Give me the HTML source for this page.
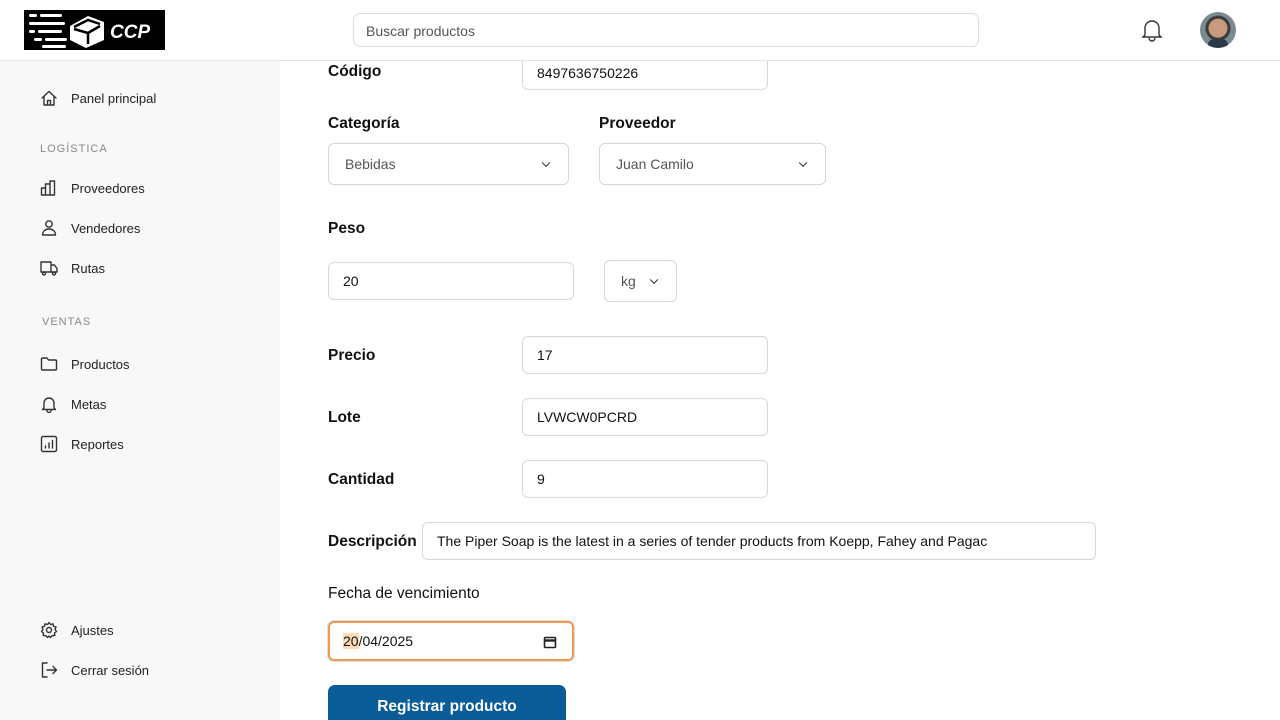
<!DOCTYPE html>
<html><head><meta charset="utf-8"><style>
*{box-sizing:border-box;margin:0;padding:0}
html{width:1280px;height:720px;overflow:hidden}
body{width:1280px;height:720px;overflow:hidden;font-family:"Liberation Sans",Arial,sans-serif;background:#fff;position:relative;color:#111}
.hdr{position:absolute;left:0;top:0;width:1280px;height:61px;background:#fff;border-bottom:1px solid #e5e5e5;z-index:5}
.side{position:absolute;left:0;top:61px;width:280px;height:659px;background:#f8f8f8}
.it{position:absolute;left:40px;font-size:13px;color:#222;display:flex;align-items:center}
.it svg{width:18px;height:18px;margin-right:13px;fill:none;stroke:#333;stroke-width:1.4;stroke-linecap:round;stroke-linejoin:round}
.sec{position:absolute;font-size:11px;letter-spacing:1px;color:#888}
.lbl{position:absolute;font-size:15.5px;font-weight:bold;color:#111}
.inp{position:absolute;border:1px solid #d6d6d6;border-radius:6px;background:#fff;font-size:14px;padding-left:14px;display:flex;align-items:center}
.sel{position:absolute;border:1px solid #d6d6d6;border-radius:6px;background:#fff;font-size:14px;color:#555;padding-left:16px;display:flex;align-items:center}
.sel:after{content:"";position:absolute;right:19px;top:50%;width:5px;height:5px;border-right:1.6px solid #222;border-bottom:1.6px solid #222;transform:translateY(-70%) rotate(45deg)}
</style></head><body>
<div class="hdr">
 <div style="position:absolute;left:24px;top:10px;width:141px;height:40px;background:#000">
  <svg width="141" height="40" viewBox="0 0 141 40">
   <g fill="#fff"><rect x="5" y="4" width="8" height="3" rx="1.5"/><rect x="16" y="4" width="22" height="3" rx="1.5"/>
   <rect x="5" y="12" width="36" height="3" rx="1.5"/><rect x="5" y="20" width="6" height="3" rx="1.5"/><rect x="14" y="20" width="24" height="3" rx="1.5"/>
   <rect x="10" y="28" width="8" height="3" rx="1.5"/><rect x="21" y="28" width="22" height="3" rx="1.5"/><rect x="18" y="35" width="24" height="3" rx="1.5"/>
   <path d="M46 16 L64 6 L80 12 L80 30 L62 38 L46 30 Z"/></g>
   <path d="M50 17 L64 10 L76 14 M64 22 L64 34 M50 19 L64 23 L76 16" stroke="#000" stroke-width="2.5" fill="none"/>
   <text x="86" y="28" font-family="Liberation Sans" font-weight="bold" font-style="italic" font-size="19" fill="#fff">CCP</text>
  </svg>
 </div>
 <div style="position:absolute;left:353px;top:13px;width:626px;height:34px;border:1px solid #ddd;border-radius:7px;font-size:14px;color:#555;padding:9px 12px">Buscar productos</div>
 <svg style="position:absolute;left:1141px;top:18px" width="22" height="24" viewBox="0 0 22 24" fill="none" stroke="#333" stroke-width="1.4"><path d="M4 17 V10 a7 7 0 0 1 14 0 V17 L20 19 H2 Z"/><path d="M8 20 a3 3 0 0 0 6 0"/></svg>
 <div style="position:absolute;left:1200px;top:12px;width:36px;height:36px;border-radius:50%;background:radial-gradient(circle at 50% 45%,#c99a7e 0 9px,#3a3a3a 10px 12px,#7a8a90 13px);overflow:hidden"><div style="position:absolute;left:8px;top:27px;width:20px;height:12px;background:#2a3a4a;border-radius:6px 6px 0 0"></div></div>
</div>
<div class="side">
 <div class="it" style="top:28px"><svg viewBox="0 0 18 18"><path d="M2 9 L9 2.5 L16 9 M4 7.5 V16 H14 V7.5 M7.5 16 V11.5 H10.5 V16"/></svg>Panel principal</div>
 <div class="sec" style="left:40px;top:82px">LOGÍSTICA</div>
 <div class="it" style="top:118px"><svg viewBox="0 0 18 18"><path d="M1.5 16 V9 H5.5 V16 M5.5 16 V5 H10 V16 M10 16 V2 H14.5 V16 Z M1.5 16 H14.5"/></svg>Proveedores</div>
 <div class="it" style="top:158px"><svg viewBox="0 0 18 18"><circle cx="9" cy="5" r="3.2"/><path d="M2.5 16 c0-4 3-6 6.5-6 s6.5 2 6.5 6 Z"/></svg>Vendedores</div>
 <div class="it" style="top:198px"><svg viewBox="0 0 18 18"><path d="M1 3 H11 V13 H1 Z M11 6 H14.5 L17 9.5 V13 H11"/><circle cx="4" cy="14.5" r="1.5"/><circle cx="14" cy="14.5" r="1.5"/></svg>Rutas</div>
 <div class="sec" style="left:42px;top:255px">VENTAS</div>
 <div class="it" style="top:294px"><svg viewBox="0 0 18 18"><path d="M1.5 4 Q1.5 3 2.5 3 H7 L8.5 5 H15.5 Q16.5 5 16.5 6 V14 Q16.5 15 15.5 15 H2.5 Q1.5 15 1.5 14 Z"/></svg>Productos</div>
 <div class="it" style="top:334px"><svg viewBox="0 0 18 18"><path d="M4 13 V8 a5 5 0 0 1 10 0 V13 L15.5 14.5 H2.5 Z M7 15.5 a2 2 0 0 0 4 0"/></svg>Metas</div>
 <div class="it" style="top:374px"><svg viewBox="0 0 18 18"><rect x="1.5" y="1.5" width="15" height="15" rx="1.5"/><path d="M5.5 13 V11 M9 13 V8 M12.5 13 V5.5"/></svg>Reportes</div>
 <div class="it" style="top:560px"><svg viewBox="0 0 18 18"><circle cx="9" cy="9" r="2.5"/><path d="M9 1.5 L10.5 3.5 L13 2.8 L13.5 5.3 L16 6 L15 8.5 L16.5 10.5 L14.5 12 L14.8 14.6 L12.2 14.6 L10.5 16.5 L9 15 L7.5 16.5 L5.8 14.6 L3.2 14.6 L3.5 12 L1.5 10.5 L3 8.5 L2 6 L4.5 5.3 L5 2.8 L7.5 3.5 Z"/></svg>Ajustes</div>
 <div class="it" style="top:600px"><svg viewBox="0 0 18 18"><path d="M7 2 H2.5 V16 H7 M7 9 H16.5 M13 5.5 L16.5 9 L13 12.5"/></svg>Cerrar sesión</div>
</div>

<div class="inp" style="left:522px;top:53px;width:246px;height:37px;padding-top:2px">8497636750226</div>
<div class="lbl" style="left:328px;top:63px">Código</div>

<div class="lbl" style="left:328px;top:115px">Categoría</div>
<div class="lbl" style="left:599px;top:115px">Proveedor</div>
<div class="sel" style="left:328px;top:143px;width:241px;height:42px">Bebidas</div>
<div class="sel" style="left:599px;top:143px;width:227px;height:42px">Juan Camilo</div>

<div class="lbl" style="left:328px;top:220px">Peso</div>
<div class="inp" style="left:328px;top:262px;width:246px;height:38px">20</div>
<div class="sel" style="left:604px;top:260px;width:73px;height:42px">kg</div>

<div class="lbl" style="left:328px;top:347px">Precio</div>
<div class="inp" style="left:522px;top:336px;width:246px;height:38px">17</div>
<div class="lbl" style="left:328px;top:409px">Lote</div>
<div class="inp" style="left:522px;top:398px;width:246px;height:38px">LVWCW0PCRD</div>
<div class="lbl" style="left:328px;top:471px">Cantidad</div>
<div class="inp" style="left:522px;top:460px;width:246px;height:38px">9</div>
<div class="lbl" style="left:328px;top:533px">Descripción</div>
<div class="inp" style="left:422px;top:522px;width:674px;height:38px">The Piper Soap is the latest in a series of tender products from Koepp, Fahey and Pagac</div>

<div style="position:absolute;left:328px;top:585px;font-size:15.5px">Fecha de vencimiento</div>
<div style="position:absolute;left:327px;top:620px;width:248px;height:42px;border:1px solid #dde;border-radius:7px"></div>
<div class="inp" style="left:328px;top:621px;width:246px;height:40px;border:2px solid #ee9b4e;border-radius:6px;font-size:14px;padding-left:13px">
 <span style="background:#fdd9b5">20</span>/04/2025
 <svg style="position:absolute;right:15px;top:12px" width="14" height="14" viewBox="0 0 14 14" fill="none" stroke="#222" stroke-width="1.6"><rect x="1.5" y="2.5" width="11" height="10" rx="1"/><path d="M1.5 5.5 H12.5" stroke-width="2.4"/></svg>
</div>

<div style="position:absolute;left:328px;top:685px;width:238px;height:35px;background:#0a5c99;border-radius:7px 7px 0 0;color:#fff;font-weight:bold;font-size:15.5px;text-align:center;padding-top:13px">Registrar producto</div>
</body></html>
